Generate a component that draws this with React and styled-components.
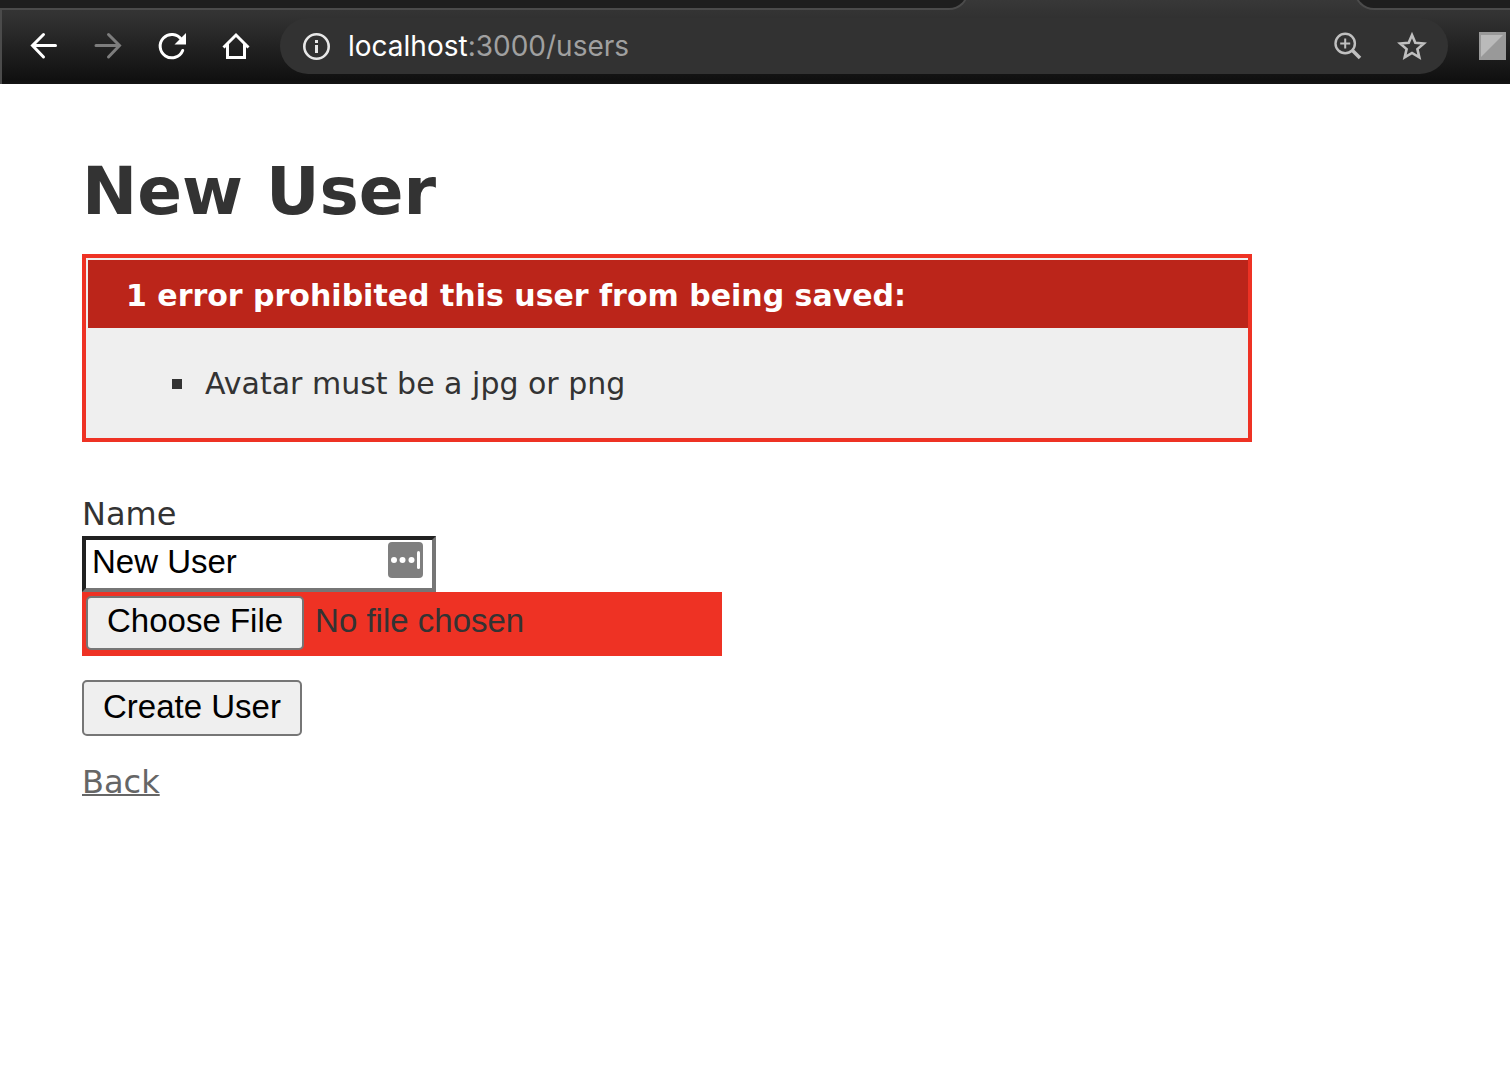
import React from "react";
import styled, { createGlobalStyle } from "styled-components";

const GlobalStyle = createGlobalStyle`
  *, *::before, *::after { box-sizing: border-box; }
  body {
    margin: 0;
    background: #fff;
    color: #333;
    font-family: Verdana, "DejaVu Sans", sans-serif;
    font-size: 32px;
    line-height: 44px;
  }
`;

const Chrome = styled.header`
  background: linear-gradient(#383838 0, #303030 20px, #101010 80px, #141414 84px);
`;

const TabStrip = styled.div`
  display: flex;
  justify-content: space-between;
  align-items: flex-end;
  height: 10px;
  overflow: hidden;
`;

const Tab = styled.div`
  flex: none;
  width: ${(p) => p.$width};
  height: 40px;
  background: #1e1e1e;
  border: 2px solid #4b4b4b;
  border-radius: ${(p) => (p.$side === "left" ? "0 0 20px 0" : "0 0 0 20px")};
  border-${(p) => p.$side}: 0;
`;

const Toolbar = styled.nav`
  display: flex;
  align-items: center;
  gap: 28px;
  padding: 8px 4px 10px 26px;
  border-left: 2px solid #4b4b4b;
`;

const NavButtons = styled.div`
  display: flex;
  gap: 32px;
`;

const IconButton = styled.button`
  display: flex;
  flex: none;
  padding: 0;
  border: 0;
  background: none;
  color: ${(p) => p.$color || "#fff"};
`;

const AddressBar = styled.div`
  display: flex;
  flex: 1;
  align-items: center;
  gap: 32px;
  height: 56px;
  padding: 0 20px;
  border-radius: 28px;
  background: #323232;
`;

const Location = styled.div`
  display: flex;
  flex: 1;
  align-items: center;
  gap: 16px;
  color: #a0a0a0;
  font: 28px/36px Inter, sans-serif;
`;

const Host = styled.span`
  color: #fff;
`;

const Page = styled.main`
  max-width: 1334px;
  padding: 71px 82px 40px;
`;

const Title = styled.h1`
  margin: 0 0 25px;
  font-size: 66px;
  line-height: 74px;
`;

const ErrorBox = styled.section`
  padding: 2px 0 0 2px;
  border: 4px solid #ee3224;
  background: #efefef;
`;

const ErrorTitle = styled.h2`
  margin: 0;
  padding: 14px 38px 10px;
  background: #bb251a;
  color: #fff;
  font-size: 30px;
  line-height: 44px;
`;

const ErrorList = styled.ul`
  margin: 0;
  padding: 34px 38px 32px 84px;
  font-size: 30px;
  list-style: none;
`;

const ErrorItem = styled.li`
  display: flex;
  align-items: center;
  gap: 23px;

  &::before {
    content: "";
    flex: none;
    width: 10px;
    height: 10px;
    background: currentColor;
  }
`;

const Form = styled.form`
  display: flex;
  flex-direction: column;
  align-items: flex-start;
  margin-top: 50px;
`;

const NameField = styled.div`
  display: flex;
  align-items: flex-start;
  width: 354px;
  height: 56px;
  padding: 2px 8px 0 6px;
  border: 4px solid;
  border-color: #212121 #767676 #767676 #212121;
`;

const NameInput = styled.input`
  flex: 1;
  min-width: 0;
  padding: 0;
  border: 0;
  outline: 0;
  background: none;
  color: #000;
  font: 33px/40px "Liberation Sans", Arial, sans-serif;
`;

const FileInput = styled.input`
  width: 640px;
  max-width: 100%;
  height: 64px;
  padding: 4px;
  background: #ee3224;
  color: #333;
  font: 33px/40px "Liberation Sans", Arial, sans-serif;

  &::file-selector-button {
    height: 54px;
    margin: 0 11px 0 0;
    padding: 0 19px 4px;
    border: 2px solid #767676;
    border-radius: 5px;
    background: #efefef;
    color: #000;
    font: inherit;
  }
`;

const SubmitButton = styled.button`
  height: 56px;
  margin-top: 24px;
  padding: 0 19px 2px;
  border: 2px solid #767676;
  border-radius: 5px;
  background: #efefef;
  color: #000;
  font: 33px/40px "Liberation Sans", Arial, sans-serif;
`;

const BackLink = styled.a`
  display: inline-block;
  margin-top: 24px;
  color: #666;
  text-decoration-thickness: 2px;
`;

const Icon = ({ children, size = 32, stroke = 3 }) => (
  <svg width={size} height={size} viewBox={`0 0 ${size} ${size}`} fill="none" stroke="currentColor" strokeWidth={stroke} aria-hidden="true">
    {children}
  </svg>
);

export default function App() {
  return (
    <>
      <GlobalStyle />
      <Chrome>
        <TabStrip>
          <Tab $side="left" $width="64.2%" />
          <Tab $side="right" $width="156px" />
        </TabStrip>
        <Toolbar>
          <NavButtons>
            <IconButton type="button" aria-label="Back">
              <Icon><path d="M27.500 15.500H5M15.500 4.500 4.500 15.500l11 11.500" strokeLinecap="round" /></Icon>
            </IconButton>
            <IconButton type="button" aria-label="Forward" $color="#7d7d7d">
              <Icon><path d="M4 15.500h23M16.500 4.500l11 11-11 11.500" strokeLinecap="round" /></Icon>
            </IconButton>
            <IconButton type="button" aria-label="Reload">
              <Icon>
                <path d="M25.500 9.500A11.700 11.700 0 1 0 26.700 20.500" strokeLinecap="round" />
                <path d="M30 3v11.500H18.500z" fill="currentColor" stroke="none" />
              </Icon>
            </IconButton>
            <IconButton type="button" aria-label="Home">
              <Icon><path d="M3.500 17.500 16 5l12.500 12.500M7.500 14v13.500h17V14" /></Icon>
            </IconButton>
          </NavButtons>
          <AddressBar>
            <Location>
              <Icon>
                <circle cx="16.500" cy="16.500" r="12.200" stroke="#e8e8e8" strokeWidth="2.600" />
                <path d="M16.500 15v8M16.500 10v3" stroke="#e8e8e8" />
              </Icon>
              <span><Host>localhost</Host>:3000/users</span>
            </Location>
            <IconButton type="button" aria-label="Zoom" $color="#c0c0c0">
              <Icon>
                <circle cx="13.200" cy="13.500" r="9.700" strokeWidth="2.400" />
                <path d="M13.200 8.500v10M8.200 13.500h10" strokeWidth="2" />
                <path d="m20.500 20.500 7.500 7.500" strokeWidth="3.600" />
              </Icon>
            </IconButton>
            <IconButton type="button" aria-label="Bookmark" $color="#c0c0c0">
              <Icon stroke={2.6}>
                <path d="m16 5 3.300 7.800 8.500.7-6.400 5.600 1.900 8.300-7.300-4.400-7.300 4.400 1.900-8.300-6.400-5.600 8.500-.7z" />
              </Icon>
            </IconButton>
          </AddressBar>
          <IconButton type="button" aria-label="Extension" $color="#999">
            <Icon size={30}>
              <path d="M3 1h27v28H3z" fill="currentColor" stroke="none" />
              <path d="M5 4h22L5 26z" fill="#bababa" stroke="none" />
            </Icon>
          </IconButton>
        </Toolbar>
      </Chrome>
      <Page>
        <Title>New User</Title>
        <ErrorBox>
          <ErrorTitle>1 error prohibited this user from being saved:</ErrorTitle>
          <ErrorList>
            <ErrorItem>Avatar must be a jpg or png</ErrorItem>
          </ErrorList>
        </ErrorBox>
        <Form onSubmit={(e) => e.preventDefault()}>
          <label htmlFor="user_name">Name</label>
          <NameField>
            <NameInput id="user_name" type="text" defaultValue="New User" />
            <IconButton type="button" aria-label="Fill from password manager" $color="#7f7f7f">
              <Icon size={36}>
                <rect width="35" height="36" rx="4" fill="currentColor" stroke="none" />
                <g fill="#fff" stroke="none">
                  <circle cx="6" cy="18" r="3" />
                  <circle cx="14.500" cy="18" r="3" />
                  <circle cx="23.500" cy="18" r="3" />
                  <rect x="29" y="9" width="3" height="18" rx="1.500" />
                </g>
              </Icon>
            </IconButton>
          </NameField>
          <FileInput type="file" aria-label="Avatar" />
          <SubmitButton type="submit">Create User</SubmitButton>
        </Form>
        <BackLink href="#users">Back</BackLink>
      </Page>
    </>
  );
}
